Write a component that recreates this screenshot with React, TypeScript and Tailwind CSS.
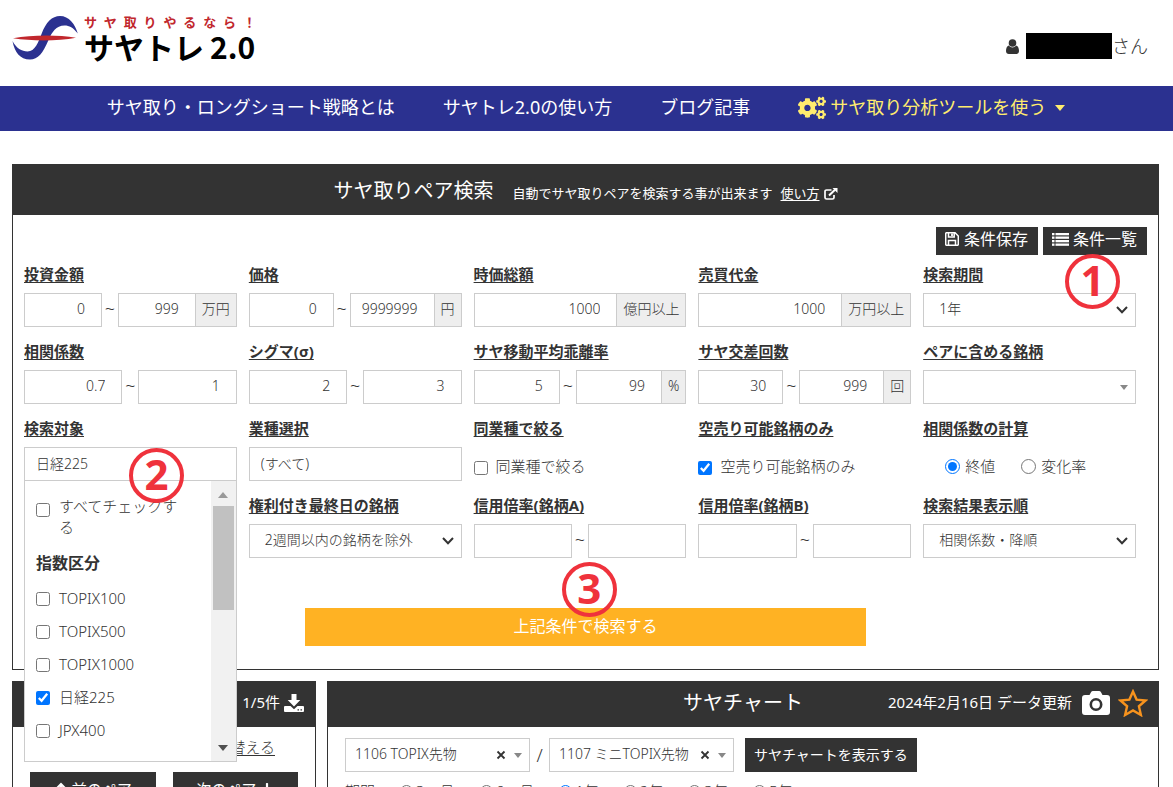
import type { ReactNode } from "react";
import { FaCogs, FaArrowUp, FaArrowDown } from "react-icons/fa";

const control = "h-[34px] border border-[#ccc] bg-white text-[14px] font-light text-[#333]";

function Logo() {
  return (
    <a href="#" className="flex items-start gap-1.5 text-black">
      <svg viewBox="0 0 66 46" className="mt-[15px] h-[46px] w-[66px]" aria-hidden="true">
        <path
          d="M0.500 26 C4 33 10 36.500 15.500 36.500 C23 36.500 26.500 27 29.500 19 C34 7 40 1 48 1 C57 1 63 9 65.800 18.500 C61 12.500 57.500 10.500 52.500 10.500 C44 10.500 40 17 36.500 25 C31 38 26 44.500 18 44.500 C8 44.500 2.500 37 0.500 26 Z"
          fill="#2b3190"
        />
        <path d="M1 23.300 C20 19.800 46 19.800 64 22.800 C46 26.200 20 26.200 1 23.300 Z" fill="#c1272d" />
      </svg>
      <span className="flex flex-col pt-[14px]">
        <span className="flex w-[172px] justify-between text-[13px] leading-[16px] font-bold text-[#c1272d]">
          {"サヤ取りやるなら！".split("").map((c, i) => (
            <span key={i}>{c}</span>
          ))}
        </span>
        <span className="flex gap-1.5 font-['Noto_Sans_CJK_JP',sans-serif] text-[30px] leading-[32px] font-bold">
          <span>サヤトレ</span>
          <span>2.0</span>
        </span>
      </span>
    </a>
  );
}

function UserIcon() {
  return (
    <svg viewBox="0 0 13 15" className="h-[15px] w-[13px]" fill="#333" aria-hidden="true">
      <circle cx="6.5" cy="4" r="3.800" />
      <path d="M2.800 6.600 C0.800 7.500 0 9.500 0 12 C0 14 1.200 15 2.800 15 H10.200 C11.800 15 13 14 13 12 C13 9.500 12.200 7.500 10.200 6.600 C9.200 7.900 8 8.500 6.500 8.500 C5 8.500 3.800 7.900 2.800 6.600 Z" />
    </svg>
  );
}

function ExternalIcon() {
  return (
    <svg viewBox="0 0 14 12" className="h-3 w-3.5" fill="none" stroke="white" aria-hidden="true">
      <path d="M7.500 2 H2.600 Q1 2 1 3.600 V9.400 Q1 11 2.600 11 H8.400 Q10 11 10 9.400 V7" strokeWidth="1.700" />
      <path d="M5 7.500 L11 1.800" strokeWidth="2" />
      <path d="M8.500 0 H13.500 V5 Z" fill="white" stroke="none" />
    </svg>
  );
}

function SaveIcon() {
  return (
    <svg viewBox="0 0 14 14" className="h-3.5 w-3.5" fill="none" stroke="white" strokeWidth="1.500" aria-hidden="true">
      <path d="M0.700 1.700 Q0.700 0.700 1.700 0.700 H10 L13.300 4 V12.300 Q13.300 13.300 12.300 13.300 H1.700 Q0.700 13.300 0.700 12.300 Z" />
      <path d="M3.500 13 V8.600 H10.500 V13 M3.500 1 V5 H9.200 V1" />
      <path d="M7 1.500 V4" strokeWidth="1.800" />
    </svg>
  );
}

function ListIcon() {
  return (
    <svg viewBox="0 0 17 13" className="h-[13px] w-[17px]" fill="white" aria-hidden="true">
      {[0, 3.5, 7, 10.5].map((y) => (
        <g key={y}>
          <rect x="0" y={y} width="2.500" height="2.300" />
          <rect x="3.500" y={y} width="13.500" height="2.300" />
        </g>
      ))}
    </svg>
  );
}

function DownloadIcon() {
  return (
    <svg viewBox="0 0 20 18" className="h-[18px] w-5" fill="white" aria-hidden="true">
      <path d="M7.500 0 H12.500 V6 H16.300 L10 12.500 L3.700 6 H7.500 Z" />
      <path d="M0 13 Q0 12 1 12 H6.500 L10 15.300 L13.500 12 H19 Q20 12 20 13 V17 Q20 18 19 18 H1 Q0 18 0 17 Z" />
      <path d="M13.500 15.200 H15 V16.500 H13.500 Z M16.500 15.200 H18 V16.500 H16.500 Z" fill="#333" />
    </svg>
  );
}

function CameraIcon() {
  return (
    <svg viewBox="0 0 28 24" className="h-6 w-7" aria-hidden="true">
      <path d="M3 4 H7.500 L9 1.200 Q9.600 0 11 0 H17 Q18.400 0 19 1.200 L20.500 4 H25 Q28 4 28 7 V21 Q28 24 25 24 H3 Q0 24 0 21 V7 Q0 4 3 4 Z" fill="white" />
      <circle cx="14" cy="13.500" r="5.200" fill="none" stroke="#333" strokeWidth="2.600" />
    </svg>
  );
}

function StarIcon() {
  return (
    <svg viewBox="0 0 30 28" className="h-7 w-[30px]" aria-hidden="true">
      <path
        d="M15 2.500 L18.600 10.600 L27.600 11.500 L20.900 17.300 L22.900 26 L15 21.500 L7.100 26 L9.100 17.300 L2.400 11.500 L11.400 10.600 Z"
        fill="none"
        stroke="#f7931e"
        strokeWidth="2.400"
      />
    </svg>
  );
}

function Triangle({ className, up }: { className: string; up?: boolean }) {
  return (
    <svg viewBox="0 0 10 6" className={className} fill="currentColor" aria-hidden="true">
      <path d={up ? "M0 6 L5 0 L10 6 Z" : "M0 0 L10 0 L5 6 Z"} />
    </svg>
  );
}

function Badge({ n, className }: { n: number; className: string }) {
  return (
    <span
      className={`pointer-events-none absolute z-30 flex h-[55px] w-[55px] items-center justify-center rounded-full border-4 border-[#ef323c] pb-1 font-['Open_Sans',sans-serif] text-[42px] leading-none font-bold text-[#ef323c] ${className}`}
    >
      {n}
    </span>
  );
}

function Field({ label, id, children }: { label: string; id: string; children: ReactNode }) {
  return (
    <div className="relative flex min-w-0 flex-col gap-2">
      <label htmlFor={id} className="text-[15px] leading-[21px] font-bold underline underline-offset-2">
        {label}
      </label>
      {children}
    </div>
  );
}

function Num({ id, value, label }: { id: string; value: string; label: string }) {
  return (
    <input
      id={id}
      aria-label={label}
      defaultValue={value}
      className={`${control} w-0 min-w-0 flex-1 pr-4 pb-1 text-right`}
    />
  );
}

function Unit({ children }: { children: ReactNode }) {
  return (
    <span className={`${control} flex items-center border-l-0 bg-[#eee]! px-[6px] pb-1`}>{children}</span>
  );
}

function Range({ label, id, from, to, unit }: { label: string; id: string; from: string; to: string; unit?: string }) {
  return (
    <Field label={label} id={id}>
      <div className="flex items-center">
        <Num id={id} value={from} label={`${label} 下限`} />
        <span className="w-4 pb-1 text-center text-[18px] leading-6 font-light">~</span>
        <Num id={`${id}-to`} value={to} label={`${label} 上限`} />
        {unit && <Unit>{unit}</Unit>}
      </div>
    </Field>
  );
}

function Single({ label, id, value, unit }: { label: string; id: string; value: string; unit: string }) {
  return (
    <Field label={label} id={id}>
      <div className="flex">
        <Num id={id} value={value} label={label} />
        <Unit>{unit}</Unit>
      </div>
    </Field>
  );
}

function Choice({ label, id, options }: { label: string; id: string; options: string[] }) {
  return (
    <Field label={label} id={id}>
      <div className="relative">
        <select id={id} className={`${control} w-full appearance-none pr-7 pb-1 pl-[15px]`}>
          {options.map((o) => (
            <option key={o}>{o}</option>
          ))}
        </select>
        <svg viewBox="0 0 12 8" className="pointer-events-none absolute top-[13px] right-2 h-2 w-3" fill="none" stroke="#333" strokeWidth="2" aria-hidden="true">
          <path d="M1 1 L6 6.200 L11 1" />
        </svg>
      </div>
    </Field>
  );
}

function TargetList() {
  const items = ["TOPIX100", "TOPIX500", "TOPIX1000", "日経225", "JPX400"];
  return (
    <div className="absolute top-[62px] left-0 z-20 flex h-[282px] w-full border border-[#ccc] bg-white text-[15px] font-light">
      <div className="min-w-0 flex-1 pt-[15px] pl-[11px]">
        <label className="flex gap-[9px] leading-[21px]">
          <input type="checkbox" className="mt-[7px] h-3.5 w-3.5 shrink-0" />
          <span className="w-[120px]">すべてチェックする</span>
        </label>
        <p className="mt-[13px] mb-[7px] text-[16px] leading-6 font-bold">指数区分</p>
        {items.map((item) => (
          <label key={item} className="flex h-[33px] items-center gap-[9px]">
            <input type="checkbox" defaultChecked={item === "日経225"} className="h-3.5 w-3.5" />
            {item}
          </label>
        ))}
      </div>
      <div className="flex w-[25px] flex-col items-center justify-between bg-[#f1f1f1] pt-[11px] pb-2.5">
        <div className="flex w-full flex-col items-center gap-2">
          <Triangle up className="h-1.5 w-2.5 text-[#999]" />
          <div className="h-[104px] w-[21px] bg-[#c1c1c1]" />
        </div>
        <Triangle className="h-1.5 w-2.5 text-[#505050]" />
      </div>
    </div>
  );
}

function StockSelect({ value, label }: { value: string; label: string }) {
  return (
    <div className="relative w-[185px]">
      <select aria-label={label} className={`${control} w-full appearance-none pb-1 pl-[9px]`}>
        <option>{value}</option>
      </select>
      <button type="button" aria-label={`${label}をクリア`} className="absolute top-[11px] right-6 h-3 w-2.5">
        <svg viewBox="0 0 10 10" className="h-2.5 w-2.5" stroke="#333" strokeWidth="1.800" aria-hidden="true">
          <path d="M1.500 1.500 L8.500 8.500 M8.500 1.500 L1.500 8.500" />
        </svg>
      </button>
      <Triangle className="pointer-events-none absolute top-[15px] right-2 h-[5px] w-2 text-[#888]" />
    </div>
  );
}

export default function App() {
  const periods = ["3ヶ月", "6ヶ月", "1年", "2年", "3年", "5年"];
  return (
    <div className="h-screen overflow-hidden bg-white font-['Noto_Sans','Noto_Sans_CJK_JP',sans-serif] text-[#333]">
      <header className="flex h-[86px] items-start justify-between pr-[25px] pl-3">
        <Logo />
        <div className="flex items-center pt-[33px] text-[18px] leading-[26px] font-light">
          <UserIcon />
          <span className="ml-[7px] h-[26px] w-[86px] bg-black" />
          <span>さん</span>
        </div>
      </header>

      <nav className="flex h-[45px] items-center justify-center gap-12 bg-[#2b3190] pb-0.5 text-[18px] text-white">
        <a href="#">サヤ取り・ロングショート戦略とは</a>
        <a href="#">サヤトレ2.0の使い方</a>
        <a href="#">ブログ記事</a>
        <a href="#" className="flex items-center text-[#ffec6e]">
          <FaCogs className="mr-1 h-7 w-7" />
          サヤ取り分析ツールを使う
          <Triangle className="ml-2 h-1.5 w-3" />
        </a>
      </nav>

      <main className="mt-[33px] mr-[14px] ml-3">
        <section className="border border-[#333]">
          <div className="flex h-[50px] items-baseline justify-center bg-[#333] pt-[11px] text-[13px] text-white">
            <h1 className="text-[20px] leading-[30px]">サヤ取りペア検索</h1>
            <p className="ml-[19px]">自動でサヤ取りペアを検索する事が出来ます</p>
            <a href="#" className="ml-2 flex items-center gap-1">
              <span className="underline underline-offset-2">使い方</span>
              <ExternalIcon />
            </a>
          </div>

          <form className="px-[11px] pt-3 pb-[23px]" onSubmit={(e) => e.preventDefault()}>
            <div className="relative flex justify-end gap-[5px]">
              <button type="button" className="flex h-7 items-center gap-[5px] bg-[#333] pr-2.5 pb-1 pl-[9px] text-[16px] text-white">
                <SaveIcon />
                条件保存
              </button>
              <button type="button" className="flex h-7 items-center gap-1 bg-[#333] pr-2.5 pb-1 pl-[9px] text-[16px] text-white">
                <ListIcon />
                条件一覧
              </button>
              <Badge n={1} className="top-[27px] right-[27px]" />
            </div>

            <div className="mt-[9px] mr-[11px] grid grid-cols-5 gap-x-3 gap-y-[14px]">
              <Range label="投資金額" id="amount" from="0" to="999" unit="万円" />
              <Range label="価格" id="price" from="0" to="9999999" unit="円" />
              <Single label="時価総額" id="cap" value="1000" unit="億円以上" />
              <Single label="売買代金" id="turnover" value="1000" unit="万円以上" />
              <Choice label="検索期間" id="period" options={["1年"]} />

              <Range label="相関係数" id="corr" from="0.7" to="1" />
              <Range label="シグマ(σ)" id="sigma" from="2" to="3" />
              <Range label="サヤ移動平均乖離率" id="dev" from="5" to="99" unit="%" />
              <Range label="サヤ交差回数" id="cross" from="30" to="999" unit="回" />
              <Field label="ペアに含める銘柄" id="include">
                <div className="relative">
                  <select id="include" className={`${control} w-full appearance-none`}>
                    <option></option>
                  </select>
                  <Triangle className="pointer-events-none absolute top-[15px] right-2 h-[5px] w-2 text-[#888]" />
                </div>
              </Field>

              <Field label="検索対象" id="target">
                <input id="target" readOnly value="日経225" className={`${control} w-full px-[11px] pb-0.5`} />
                <TargetList />
                <Badge n={2} className="top-[30px] left-[105px]" />
              </Field>
              <Field label="業種選択" id="sector">
                <input id="sector" readOnly value="(すべて)" className={`${control} w-full px-[11px] pb-0.5`} />
              </Field>
              <Field label="同業種で絞る" id="same">
                <label className="flex h-[34px] items-center gap-2 pt-1 text-[15px] font-light">
                  <input id="same" type="checkbox" className="mt-1 h-3.5 w-3.5" />
                  同業種で絞る
                </label>
              </Field>
              <Field label="空売り可能銘柄のみ" id="short">
                <label className="flex h-[34px] items-center gap-2 pt-1 text-[15px] font-light">
                  <input id="short" type="checkbox" defaultChecked className="mt-1 h-3.5 w-3.5" />
                  空売り可能銘柄のみ
                </label>
              </Field>
              <Field label="相関係数の計算" id="close">
                <div className="flex h-[34px] items-center gap-[26px] pt-1 pl-[22px] text-[15px] font-light">
                  <label className="flex items-center gap-[5px]">
                    <input id="close" type="radio" name="calc" defaultChecked className="h-[15px] w-[15px]" />
                    終値
                  </label>
                  <label className="flex items-center gap-[5px]">
                    <input type="radio" name="calc" className="h-[15px] w-[15px]" />
                    変化率
                  </label>
                </div>
              </Field>

              <div aria-hidden="true" />
              <Choice label="権利付き最終日の銘柄" id="rights" options={["2週間以内の銘柄を除外"]} />
              <Range label="信用倍率(銘柄A)" id="margin-a" from="" to="" />
              <Range label="信用倍率(銘柄B)" id="margin-b" from="" to="" />
              <Choice label="検索結果表示順" id="order" options={["相関係数・降順"]} />
            </div>

            <div className="relative mx-auto mt-[50px] w-1/2">
              <button type="submit" className="h-[38px] w-full bg-[#ffb223] pb-0.5 text-[16px] text-white">
                上記条件で検索する
              </button>
              <Badge n={3} className="-top-[46px] left-[257px]" />
            </div>
          </form>
        </section>

        <div className="mt-[11px] flex gap-[11px]">
          <section className="w-[304px] shrink-0 border border-[#333]">
            <div className="flex h-[45px] items-center justify-end gap-1 bg-[#333] pr-[11px] pb-1 text-[15px] text-white">
              <span>1/5件</span>
              <button type="button" aria-label="ダウンロード">
                <DownloadIcon />
              </button>
            </div>
            <div className="px-[17px] pt-[9px]">
              <div className="flex justify-end pr-[23px] text-[15px] leading-[22px] font-light">
                <a href="#" className="underline underline-offset-2">並べ替える</a>
              </div>
              <div className="mt-[14px] grid grid-cols-2 gap-[17px] text-[15px] text-white">
                <button type="button" className="flex h-[38px] items-center justify-center gap-1 bg-[#333] pb-1">
                  <FaArrowUp className="h-3.5 w-3.5" />
                  前のペア
                </button>
                <button type="button" className="flex h-[38px] items-center justify-center gap-1 bg-[#333] pb-1">
                  次のペア
                  <FaArrowDown className="h-3.5 w-3.5" />
                </button>
              </div>
            </div>
          </section>

          <section className="min-w-0 flex-1 border border-[#333]">
            <div className="grid h-[45px] grid-cols-[1fr_auto_1fr] items-center bg-[#333] pb-1 text-white">
              <span />
              <h2 className="text-[20px]">サヤチャート</h2>
              <div className="flex items-center justify-end pr-2.5">
                <span className="mr-2.5 text-[15px]">2024年2月16日 データ更新</span>
                <button type="button" aria-label="画像を保存" className="mr-2">
                  <CameraIcon />
                </button>
                <button type="button" aria-label="お気に入り">
                  <StarIcon />
                </button>
              </div>
            </div>
            <div className="px-[17px] pt-[11px]">
              <div className="flex items-center">
                <StockSelect value="1106 TOPIX先物" label="銘柄A" />
                <span className="w-[19px] text-center text-[18px] font-light">/</span>
                <StockSelect value="1107 ミニTOPIX先物" label="銘柄B" />
                <button type="button" className="ml-[11px] h-[34px] bg-[#333] px-[9px] pb-0.5 text-[14px] text-white">
                  サヤチャートを表示する
                </button>
              </div>
              <div className="mt-2 flex items-center text-[15px] leading-[22px] font-light">
                <span className="mr-[25px]">期間</span>
                {periods.map((p) => (
                  <label key={p} className="mr-[25px] flex items-center gap-[3px]">
                    <input type="radio" name="range" defaultChecked={p === "1年"} className="h-[13px] w-[13px]" />
                    {p}
                  </label>
                ))}
              </div>
            </div>
          </section>
        </div>
      </main>
    </div>
  );
}
